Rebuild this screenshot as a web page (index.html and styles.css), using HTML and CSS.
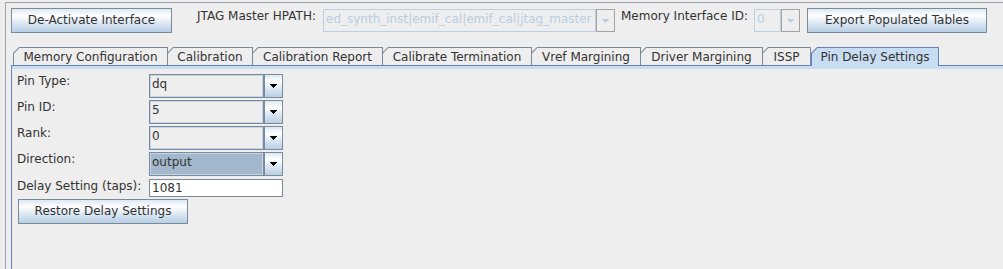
FILE: index.html
```html
<!DOCTYPE html>
<html>
<head>
<meta charset="utf-8">
<link rel="stylesheet" href="styles.css">
</head>
<body>
<div class="frame">
  <div class="toolbar">
    <button class="btn btn-deact">De-Activate Interface</button>
    <span class="lbl lbl-hpath">JTAG Master HPATH:</span>
    <div class="combo combo-disabled combo-hpath">
      <div class="combo-field">ed_synth_inst|emif_cal|emif_cal|jtag_master</div>
      <div class="combo-btn"><svg class="arrow" width="7" height="4" viewBox="0 0 7 4"><path d="M0 0H7V1H6V2H5V3H4V4H3V3H2V2H1V1H0Z"/></svg></div>
    </div>
    <span class="lbl lbl-memid">Memory Interface ID:</span>
    <div class="combo combo-disabled combo-memid">
      <div class="combo-field">0</div>
      <div class="combo-btn"><svg class="arrow" width="7" height="4" viewBox="0 0 7 4"><path d="M0 0H7V1H6V2H5V3H4V4H3V3H2V2H1V1H0Z"/></svg></div>
    </div>
    <button class="btn btn-export">Export Populated Tables</button>
  </div>

  <div class="tabpane">
    <div class="tabs">
      <div class="tab tab-mem"><span class="tab-in">Memory Configuration</span></div>
      <div class="tab tab-cal"><span class="tab-in">Calibration</span></div>
      <div class="tab tab-calrep"><span class="tab-in">Calibration Report</span></div>
      <div class="tab tab-calterm"><span class="tab-in">Calibrate Termination</span></div>
      <div class="tab tab-vref"><span class="tab-in">Vref Margining</span></div>
      <div class="tab tab-driver"><span class="tab-in">Driver Margining</span></div>
      <div class="tab tab-issp"><span class="tab-in">ISSP</span></div>
      <div class="tab tab-pin tab-selected"><span class="tab-in">Pin Delay Settings</span></div>
    </div>
    <div class="panel">
      <div class="form">
        <span class="flabel">Pin Type:</span>
        <div class="combo combo-form">
          <div class="combo-field">dq</div>
          <div class="combo-btn"><svg class="arrow" width="7" height="4" viewBox="0 0 7 4"><path d="M0 0H7V1H6V2H5V3H4V4H3V3H2V2H1V1H0Z"/></svg></div>
        </div>
        <span class="flabel">Pin ID:</span>
        <div class="combo combo-form">
          <div class="combo-field">5</div>
          <div class="combo-btn"><svg class="arrow" width="7" height="4" viewBox="0 0 7 4"><path d="M0 0H7V1H6V2H5V3H4V4H3V3H2V2H1V1H0Z"/></svg></div>
        </div>
        <span class="flabel">Rank:</span>
        <div class="combo combo-form">
          <div class="combo-field">0</div>
          <div class="combo-btn"><svg class="arrow" width="7" height="4" viewBox="0 0 7 4"><path d="M0 0H7V1H6V2H5V3H4V4H3V3H2V2H1V1H0Z"/></svg></div>
        </div>
        <span class="flabel">Direction:</span>
        <div class="combo combo-form combo-focused">
          <div class="combo-field">output</div>
          <div class="combo-btn"><svg class="arrow" width="7" height="4" viewBox="0 0 7 4"><path d="M0 0H7V1H6V2H5V3H4V4H3V3H2V2H1V1H0Z"/></svg></div>
        </div>
        <span class="flabel flabel-field">Delay Setting (taps):</span>
        <div class="textfield">1081</div>
      </div>
      <button class="btn btn-restore">Restore Delay Settings</button>
    </div>
  </div>
</div>
</body>
</html>
```

FILE: styles.css
```css
html, body {
  margin: 0;
  padding: 0;
}
body {
  background: #eeeeee;
  width: 1003px;
  height: 269px;
  overflow: hidden;
  font-family: "DejaVu Sans", sans-serif;
  font-size: 12px;
  color: #333333;
}

.frame {
  box-sizing: border-box;
  margin: 2px 0 0 5px;
  border-top: 1px solid #9aa3ad;
  border-left: 1px solid #9aa3ad;
  padding: 5px 0 0 5px;
  width: 998px;
  height: 267px;
  overflow: hidden;
  display: flex;
  flex-direction: column;
}

/* ---------- toolbar ---------- */
.toolbar {
  display: flex;
  align-items: flex-start;
  height: 25px;
  flex: none;
}

.btn {
  -webkit-appearance: none;
  appearance: none;
  box-sizing: border-box;
  height: 25px;
  margin: 0;
  padding: 0;
  border: 1px solid #7a8a99;
  border-radius: 0;
  background: linear-gradient(#dde8f3 0%, #ffffff 30%, #dde8f3 60%, #b8cfe5 100%);
  font-family: "DejaVu Sans", sans-serif;
  font-size: 12px;
  line-height: 23px;
  color: #333333;
  text-align: center;
  white-space: nowrap;
  flex: none;
}
.btn-deact { width: 161px; }
.btn-export { width: 180px; margin-left: 7px; }
.btn-restore { width: 170px; margin-top: 2px; }

.lbl {
  line-height: 15px;
  margin-top: 1px;
  white-space: nowrap;
  flex: none;
}
.lbl-hpath { margin-left: 25px; width: 126px; }
.lbl-memid { margin-left: 6px; width: 133px; }

/* ---------- combos ---------- */
.combo {
  display: flex;
  box-sizing: border-box;
  flex: none;
}
.combo-field {
  box-sizing: border-box;
  border: 1px solid #7a8a99;
  box-shadow: inset 0 0 0 1px #c4d6ea;
  padding-left: 2px;
  line-height: 18px;
  white-space: nowrap;
  overflow: hidden;
}
.combo-btn {
  box-sizing: border-box;
  width: 19px;
  border: 1px solid #7a8a99;
  background: linear-gradient(#dde8f3 0%, #ffffff 30%, #dde8f3 60%, #b8cfe5 100%);
  display: flex;
  align-items: center;
  justify-content: center;
  padding-right: 1px;
}
.arrow {
  display: block;
  fill: #000000;
}

.combo-disabled {
  margin-top: 1px;
  height: 23px;
}
.combo-disabled .combo-field {
  border-color: #b8cfe5;
  box-shadow: none;
  color: #b8cfe5;
}
.combo-disabled .combo-btn {
  border-color: #a3a3a3;
  background: #eeeeee;
}
.combo-disabled .arrow { fill: #b8cfe5; }
.combo-hpath .combo-field { width: 273px; }
.combo-memid .combo-field { width: 27px; }

.combo-form {
  height: 24px;
}
.combo-form .combo-field { width: 115px; }
.combo-focused .combo-field {
  background: #a3b8cc;
}

/* ---------- tabs ---------- */
.tabpane {
  margin-top: 14px;
  flex: 1;
  display: flex;
  flex-direction: column;
}
.tabs {
  display: flex;
  align-items: flex-end;
  height: 18px;
  padding-left: 2px;
  flex: none;
}
.tab {
  position: relative;
  box-sizing: border-box;
  height: 18px;
  padding: 1px 1px 0 1px;
  margin-left: -1px;
  background: #7a8a99;
  clip-path: polygon(6px 0, 100% 0, 100% 100%, 0 100%, 0 6px);
  flex: none;
}
.tab-in {
  display: block;
  height: 100%;
  overflow: hidden;
  background: #eeeeee;
  clip-path: polygon(5.4px 0, 100% 0, 100% 100%, 0 100%, 0 5.4px);
  text-align: center;
  line-height: 18px;
  white-space: nowrap;
}
.tab-mem { width: 155px; margin-left: 0; }
.tab-cal { width: 86px; }
.tab-calrep { width: 131px; }
.tab-calterm { width: 150px; }
.tab-vref { width: 110px; }
.tab-driver { width: 123px; }
.tab-issp { width: 49px; }
.tab-pin { width: 128px; margin-left: 0; }

.tab-selected {
  z-index: 1;
  height: 19px;
  margin-bottom: -1px;
  background: #6382bf;
}
.tab-selected .tab-in {
  background: #c8ddf2;
}

.panel {
  flex: 1;
  border-top: 1px solid #6382bf;
  border-left: 1px solid #6382bf;
  box-shadow: inset 0 3px 0 #c8ddf2;
  padding: 8px 0 0 6px;
}

/* ---------- form ---------- */
.form {
  display: grid;
  grid-template-columns: 131px 134px;
  grid-template-rows: 24px 24px 24px 24px 19px;
  row-gap: 2px;
}
.flabel {
  align-self: start;
  line-height: 15px;
  margin-left: -1px;
  white-space: nowrap;
}
.flabel-field {
  margin-top: 1px;
}
.textfield {
  align-self: start;
  box-sizing: border-box;
  height: 18px;
  margin-top: 1px;
  border: 1px solid #7a8a99;
  background: #ffffff;
  padding-left: 2px;
  line-height: 16px;
  color: #333333;
}
```
